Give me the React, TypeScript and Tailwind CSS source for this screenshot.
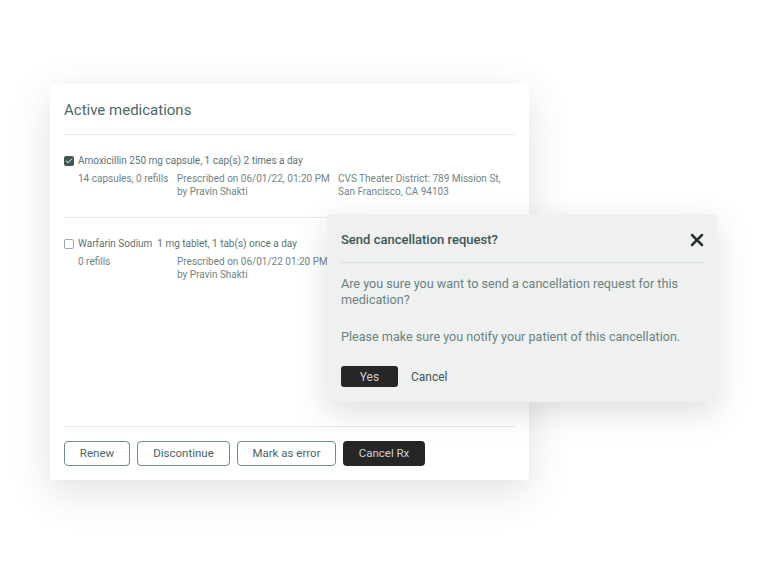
import { Check, X } from 'lucide-react'

const FONT = "font-['Roboto','Liberation_Sans',sans-serif]"

const MEDS = [
  {
    checked: true,
    name: 'Amoxicillin 250 mg capsule, 1 cap(s) 2 times a day',
    qty: '14 capsules, 0 refills',
    rx: ['Prescribed on 06/01/22, 01:20 PM', 'by Pravin Shakti'],
    pharmacy: ['CVS Theater District: 789 Mission St,', 'San Francisco, CA 94103'],
  },
  {
    checked: false,
    name: 'Warfarin Sodium\u00a0 1 mg tablet, 1 tab(s) once a day',
    qty: '0 refills',
    rx: ['Prescribed on 06/01/22 01:20 PM', 'by Pravin Shakti'],
    pharmacy: [],
  },
]

function MedRow({ med, last }: { med: (typeof MEDS)[number]; last?: boolean }) {
  return (
    <div className={`pt-[19px] ${last ? '' : 'border-b border-[#e6eaea] pb-[19px]'}`}>
      <div className="flex items-center gap-[4px] text-[10px] leading-[14px] text-[#5b7473]">
        {med.checked ? (
          <span className="flex h-[10px] w-[10px] items-center justify-center rounded-[2px] bg-[#3f5756]">
            <Check className="h-[8px] w-[8px] text-white" strokeWidth={3} />
          </span>
        ) : (
          <span className="h-[10px] w-[10px] rounded-[2px] border border-[#9aa9a8] bg-white" />
        )}
        <span>{med.name}</span>
      </div>
      <div className="mt-[4px] grid grid-cols-[99px_161px_1fr] pl-[14px] text-[10px] leading-[13px] text-[#6f8584]">
        <div>{med.qty}</div>
        <div>
          {med.rx.map((l) => (
            <div key={l}>{l}</div>
          ))}
        </div>
        <div>
          {med.pharmacy.map((l) => (
            <div key={l}>{l}</div>
          ))}
        </div>
      </div>
    </div>
  )
}

export default function App() {
  return (
    <div className={`relative h-[565px] w-[768px] overflow-hidden bg-white ${FONT}`}>
      <div className="ml-[50px] mt-[84px] flex h-[396px] w-[479px] flex-col rounded-[3px] bg-white px-[14px] shadow-[0_12px_40px_rgba(60,70,70,0.16)]">
        <div className="border-b border-[#e3e8e8] pb-[14px] pt-[16px] text-[15px] leading-[20px] text-[#4d6766]">
          Active medications
        </div>
        {MEDS.map((m, i) => (
          <MedRow key={m.name} med={m} last={i === MEDS.length - 1} />
        ))}
        <div className="flex-1 border-b border-[#e6eaea]" />
        <div className="flex gap-[7px] pb-[14px] pt-[14px] text-[11.5px] text-[#4a6463]">
          <button className="h-[25px] w-[66px] rounded-[4px] border border-[#6b8b8a]">Renew</button>
          <button className="h-[25px] w-[93px] rounded-[4px] border border-[#6b8b8a]">Discontinue</button>
          <button className="h-[25px] w-[99px] rounded-[4px] border border-[#6b8b8a]">Mark as error</button>
          <button className="h-[25px] w-[82px] rounded-[4px] bg-[#262626] text-[#c8d4d2]">Cancel Rx</button>
        </div>
      </div>

      <div className="absolute left-[327px] top-[214px] w-[390px] rounded-[4px] bg-[#eef1f0] px-[14px] pb-[15px] shadow-[0_10px_32px_rgba(60,70,70,0.18)]">
        <div className="flex items-center justify-between border-b border-[#d8dedd] pb-[12px] pt-[16px]">
          <span className="text-[13px] font-medium leading-[18px] text-[#3d5453]">Send cancellation request?</span>
          <X className="-mr-[4px] h-[20px] w-[20px] text-[#263332]" strokeWidth={3} />
        </div>
        <p className="mt-[13px] text-[12.6px] leading-[16px] text-[#6b8180]">
          Are you sure you want to send a cancellation request for this medication?
        </p>
        <p className="mt-[21px] text-[12.6px] leading-[16px] text-[#6b8180]">
          Please make sure you notify your patient of this cancellation.
        </p>
        <div className="mt-[21px] flex items-center gap-[13px] text-[12px]">
          <button className="h-[21px] w-[57px] rounded-[3px] bg-[#262626] text-[#c8d4d2]">Yes</button>
          <button className="text-[#3d5453]">Cancel</button>
        </div>
      </div>
    </div>
  )
}
